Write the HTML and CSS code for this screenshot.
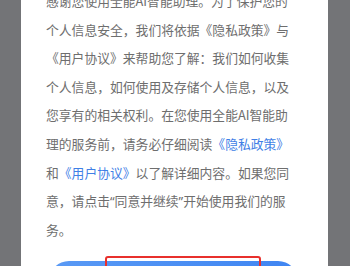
FILE: index.html
```html
<!DOCTYPE html>
<html lang="zh-CN">
<head>
<meta charset="utf-8">
<link rel="stylesheet" href="styles.css">
</head>
<body>
<div class="screen">
  <div class="panel">
    <div class="text">
      <div class="line">感谢您使用全能AI智能助理。为了保护您的</div>
      <div class="line">个人信息安全，我们将依据《隐私政策》与</div>
      <div class="line">《用户协议》来帮助您了解：我们如何收集</div>
      <div class="line">个人信息，如何使用及存储个人信息，以及</div>
      <div class="line">您享有的相关权利。在您使用全能AI智能助</div>
      <div class="line">理的服务前，请务必仔细阅读<span class="link">《隐私政策》</span></div>
      <div class="line">和<span class="link">《用户协议》</span>以了解详细内容。如果您同</div>
      <div class="line">意，请点击<span class="q">“</span>同意并继续<span class="q">”</span>开始使用我们的服</div>
      <div class="line">务。</div>
    </div>
    <div class="actions">
      <div class="btn"></div>
      <div class="highlight"></div>
    </div>
  </div>
</div>
</body>
</html>
```
FILE: styles.css
```css
html, body {
  margin: 0;
  padding: 0;
  width: 350px;
  height: 266px;
  overflow: hidden;
}
.screen {
  width: 350px;
  height: 266px;
  background: #737477;
  display: flex;
  justify-content: flex-start;
}
.panel {
  margin-left: 21px;
  width: 307px;
  height: 266px;
  background: #ffffff;
  box-sizing: border-box;
  padding-left: 25px;
  overflow: hidden;
}
.text {
  margin-top: -13px;
  font-family: "Noto Sans CJK SC", "Noto Sans", sans-serif;
  font-size: 12.8px;
  line-height: 28.6px;
  color: #6e6e6e;
}
.line {
  white-space: nowrap;
}
.q {
  font-family: "Noto Sans", sans-serif;
}
.link {
  color: #3f7fe6;
}
.actions {
  position: relative;
  margin-top: 17px;
  width: 253px;
  height: 40px;
}
.btn {
  width: 249px;
  height: 40px;
  margin-left: 3px;
  border-radius: 20px;
  background: linear-gradient(90deg, #5a9af5, #3f85f2);
}
.highlight {
  position: absolute;
  left: 59px;
  top: -5px;
  width: 156px;
  height: 30px;
  border: 2px solid #e8302c;
  border-radius: 3px;
  box-sizing: border-box;
}
```
